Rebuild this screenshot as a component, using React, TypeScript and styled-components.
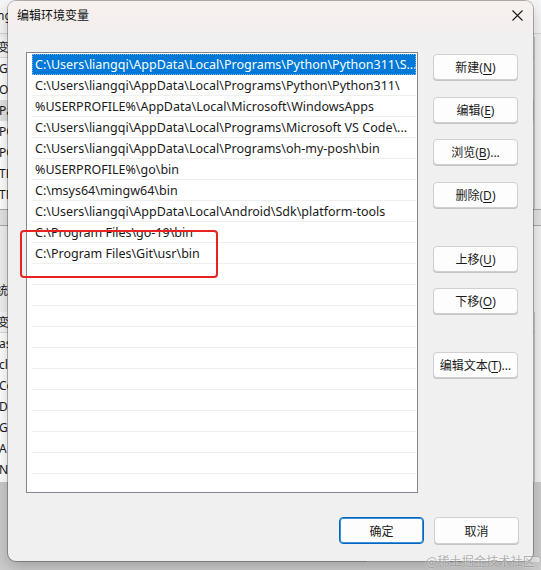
import React from "react";
import styled, { createGlobalStyle } from "styled-components";

const Global = createGlobalStyle`
  html, body { margin: 0; padding: 0; overflow: hidden; background: #d2d2d2; }
  * { box-sizing: border-box; }
`;

const FONT = `"Noto Sans", "Noto Sans CJK SC", sans-serif`;

const Desktop = styled.div`
  position: relative;
  width: 541px;
  height: 570px;
  overflow: hidden;
  background: #cdcdcd;
  font-family: ${FONT};
`;

/* ---------- window behind the dialog ---------- */
const BackWindow = styled.div`
  position: absolute;
  left: 0;
  top: 0;
  width: 541px;
  height: 562px;
  background: #f0f0f0;
  display: flex;
  flex-direction: column;
  font-size: 12px;
  color: #1a1a1a;
`;

const BackTop = styled.div`
  height: 34px;
  display: flex;
  align-items: center;
  padding-bottom: 2px;
  background: #f6f6f6;
  border-bottom: 1px solid #d6d6d6;
`;

const BackLabel = styled.span<{ $shift: number }>`
  margin-left: ${(p) => p.$shift}px;
  white-space: nowrap;
`;

const BackPanel = styled.div<{ $h: number }>`
  height: ${(p) => p.$h}px;
  margin-top: 3px;
  background: #ffffff;
  border-right: 1px solid #c4c4c4;
  margin-right: 6px;
  display: flex;
  flex-direction: column;
`;

const BackRow = styled.div<{ $sel?: boolean; $head?: boolean }>`
  height: 21px;
  flex: none;
  display: flex;
  align-items: center;
  white-space: nowrap;
  background: ${(p) => (p.$sel ? "#e3e3e3" : p.$head ? "#f7f7f7" : "transparent")};
  border-bottom: ${(p) => (p.$head ? "1px solid #dcdcdc" : "none")};
`;

const BackScroll = styled.div`
  height: 17px;
  background: #e4e4e4;
  border-top: 1px solid #a9a9a9;
  border-bottom: 1px solid #a9a9a9;
`;

const BackSection = styled.div`
  height: 83px;
  display: flex;
  align-items: flex-end;
  padding-bottom: 10px;
`;

const BackBottom = styled.div`
  flex: 1;
  background: #cbcbcb;
  display: flex;
  justify-content: flex-end;
  align-items: flex-end;
  gap: 10px;
`;

const BackButton = styled.div<{ $w: number }>`
  width: ${(p) => p.$w}px;
  height: 6px;
  background: #e9e9e9;
  border: 1px solid #b9b9b9;
  border-bottom: none;
  border-radius: 3px 3px 0 0;
`;

/* ---------- dialog ---------- */
const Dialog = styled.div`
  position: absolute;
  left: 8px;
  top: 1px;
  width: 525px;
  height: 560px;
  border-radius: 8px;
  background: #f0f0f0;
  box-shadow: 0 0 0 1px rgba(0, 0, 0, 0.28), 0 6px 16px rgba(0, 0, 0, 0.22);
  display: flex;
  flex-direction: column;
  overflow: hidden;
`;

const TitleBar = styled.div`
  height: 32px;
  flex: none;
  display: flex;
  align-items: center;
  justify-content: space-between;
  padding: 0 10px 4px 9px;
  background: linear-gradient(#f7f0ef, #f3efee);
`;

const Title = styled.span`
  font-size: 12px;
  color: #111;
`;

const CloseGlyph = styled.svg`
  width: 11px;
  height: 11px;
  display: block;
`;

const Body = styled.div`
  display: grid;
  grid-template-columns: 392px 85px;
  column-gap: 15px;
  padding: 19px 15px 0 18px;
`;

const List = styled.div`
  height: 441px;
  background: #ffffff;
  border: 1px solid #828790;
  padding: 1px 1px 0 5px;
  overflow: hidden;
  display: flex;
  flex-direction: column;
`;

const Row = styled.div<{ $selected?: boolean }>`
  height: 21px;
  flex: none;
  display: flex;
  align-items: center;
  padding: 1px 0 0 3px;
  font-size: 12.5px;
  white-space: nowrap;
  overflow: hidden;
  color: ${(p) => (p.$selected ? "#ffffff" : "#1a1a1a")};
  background: ${(p) => (p.$selected ? "#0078d7" : "#ffffff")};
  border-bottom: 1px solid ${(p) => (p.$selected ? "#0078d7" : "#efefef")};
  outline: ${(p) => (p.$selected ? "1px dotted #7fb6e6" : "none")};
  outline-offset: -1px;
`;

const ButtonColumn = styled.div`
  display: flex;
  flex-direction: column;
`;

const Button = styled.div<{ $gap?: number; $default?: boolean; $h?: number }>`
  margin-top: ${(p) => p.$gap ?? 0}px;
  width: 85px;
  height: ${(p) => p.$h ?? 26}px;
  flex: none;
  display: flex;
  align-items: center;
  justify-content: center;
  font-size: 12px;
  color: #1b1b1b;
  background: #fdfdfd;
  border: 1px solid ${(p) => (p.$default ? "#0067c0" : "#d0d0d0")};
  box-shadow: ${(p) => (p.$default ? "inset 0 0 0 1px #3d8fd6" : "0 1px 0 #c4c4c4")};
  border-radius: 4px;
  white-space: nowrap;
`;

const Key = styled.u`
  text-decoration: underline;
  text-underline-offset: 2px;
`;

const Footer = styled.div`
  display: flex;
  justify-content: flex-end;
  gap: 10px;
  padding: 24px 14px 0 0;
`;

/* ---------- overlays ---------- */
const Annotation = styled.div`
  position: absolute;
  left: 20px;
  top: 230px;
  width: 198px;
  height: 48px;
  border: 2.5px solid #e8231f;
  border-radius: 4px;
  pointer-events: none;
`;

const Watermark = styled.div`
  position: absolute;
  right: 6px;
  bottom: 1px;
  font-size: 12px;
  color: rgba(110, 110, 110, 0.55);
  text-shadow: 0 0 2px rgba(255, 255, 255, 0.9);
  letter-spacing: 0.2px;
  font-family: "Noto Sans CJK SC", sans-serif;
`;

const paths = [
  "C:\\Users\\liangqi\\AppData\\Local\\Programs\\Python\\Python311\\S...",
  "C:\\Users\\liangqi\\AppData\\Local\\Programs\\Python\\Python311\\",
  "%USERPROFILE%\\AppData\\Local\\Microsoft\\WindowsApps",
  "C:\\Users\\liangqi\\AppData\\Local\\Programs\\Microsoft VS Code\\...",
  "C:\\Users\\liangqi\\AppData\\Local\\Programs\\oh-my-posh\\bin",
  "%USERPROFILE%\\go\\bin",
  "C:\\msys64\\mingw64\\bin",
  "C:\\Users\\liangqi\\AppData\\Local\\Android\\Sdk\\platform-tools",
  "C:\\Program Files\\go-19\\bin",
  "C:\\Program Files\\Git\\usr\\bin",
];

const rows = [...paths, ...Array(12).fill("")];

const userVars = ["GO", "Or", "Pa", "PO", "PO", "TE", "TM"];
const sysVars = ["as", "cla", "Co", "Dr", "G", "A", "N"];

export default function App() {
  return (
    <Desktop>
      <Global />
      <BackWindow>
        <BackTop>
          <BackLabel $shift={-3}>ng</BackLabel>
        </BackTop>
        <BackPanel $h={172}>
          <BackRow $head>
            <BackLabel $shift={-3}>变</BackLabel>
          </BackRow>
          {userVars.map((v, i) => (
            <BackRow key={i} $sel={v === "Pa"}>
              <BackLabel $shift={-1}>{v}</BackLabel>
            </BackRow>
          ))}
        </BackPanel>
        <BackScroll />
        <BackSection>
          <BackLabel $shift={-4}>统</BackLabel>
        </BackSection>
        <BackPanel $h={170}>
          <BackRow $head>
            <BackLabel $shift={-3}>变</BackLabel>
          </BackRow>
          {sysVars.map((v, i) => (
            <BackRow key={i}>
              <BackLabel $shift={-1}>{v}</BackLabel>
            </BackRow>
          ))}
        </BackPanel>
        <BackBottom>
          <BackButton $w={86} />
          <BackButton $w={80} />
        </BackBottom>
      </BackWindow>

      <Dialog>
        <TitleBar>
          <Title>编辑环境变量</Title>
          <CloseGlyph viewBox="0 0 11 11">
            <path d="M0.5 0.5 L10.5 10.5 M10.5 0.5 L0.5 10.5" stroke="#1a1a1a" strokeWidth="1.1" fill="none" />
          </CloseGlyph>
        </TitleBar>
        <Body>
          <List>
            {rows.map((r, i) => (
              <Row key={i} $selected={i === 0}>
                {r}
              </Row>
            ))}
          </List>
          <ButtonColumn>
            <Button $gap={2}>新建(<Key>N</Key>)</Button>
            <Button $gap={17}>编辑(<Key>E</Key>)</Button>
            <Button $gap={16}>浏览(<Key>B</Key>)...</Button>
            <Button $gap={17}>删除(<Key>D</Key>)</Button>
            <Button $gap={38}>上移(<Key>U</Key>)</Button>
            <Button $gap={16}>下移(<Key>O</Key>)</Button>
            <Button $gap={38}>编辑文本(<Key>T</Key>)...</Button>
          </ButtonColumn>
        </Body>
        <Footer>
          <Button $default $h={27}>确定</Button>
          <Button $h={27}>取消</Button>
        </Footer>
      </Dialog>

      <Annotation />
      <Watermark>@稀土掘金技术社区</Watermark>
    </Desktop>
  );
}
